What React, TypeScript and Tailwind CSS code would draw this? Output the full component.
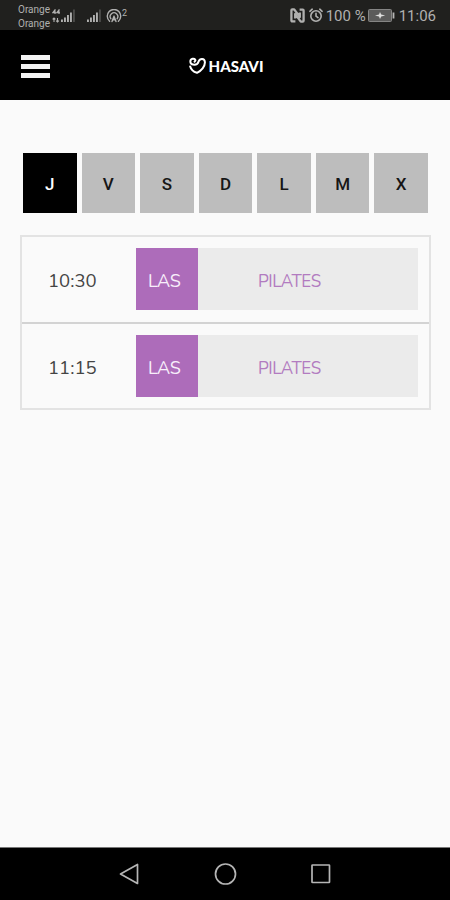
const days = ["J", "V", "S", "D", "L", "M", "X"];

const classes = [
	{ time: "10:30", room: "LAS", name: "PILATES" },
	{ time: "11:15", room: "LAS", name: "PILATES" },
];

function SignalIcon() {
	return (
		<svg width="14" height="14" viewBox="0 0 14 14" fill="currentColor">
			<rect x="0" y="10.5" width="1.9" height="2.5" />
			<rect x="3" y="8.5" width="1.9" height="4.5" />
			<rect x="6" y="6" width="1.9" height="7" />
			<rect x="9" y="3.5" width="1.9" height="9.5" />
			<rect x="12" y="0.5" width="1.9" height="12.5" opacity="0.3" />
		</svg>
	);
}

function DataIcon() {
	return (
		<svg
			width="9"
			height="14"
			viewBox="0 0 9 14"
			fill="none"
			stroke="currentColor"
			strokeWidth="1.1"
		>
			<path d="M3 5V.8L.8 3.6h3.1M7 5V.8L4.8 3.6h3.1" />
			<path d="M2 13V9M0.6 10.4 2 9l1.4 1.4M5.5 9v4M4.1 11.6l1.4 1.4 1.4-1.4" />
		</svg>
	);
}

function HotspotIcon() {
	return (
		<svg
			width="16"
			height="14"
			viewBox="0 0 16 14"
			fill="none"
			stroke="currentColor"
			strokeWidth="1.4"
			strokeLinecap="round"
		>
			<path d="M3.6 12.2A6.7 6.7 0 1 1 12.4 12.2" />
			<path d="M4.9 9.8A3.8 3.8 0 1 1 11.1 9.8" />
			<path d="M8 7.2 6 12.6M8 7.2l2 5.4M6.8 10.7h2.4" />
		</svg>
	);
}

function NfcIcon() {
	return (
		<svg
			width="15"
			height="15"
			viewBox="0 0 15 15"
			fill="none"
			stroke="currentColor"
			strokeWidth="2.3"
			strokeLinejoin="round"
		>
			<path d="M5.4 13.4H2.2a.8.8 0 0 1-.8-.8V2.2q0-.8.8-.8h2L9.8 9V4.4" />
			<path d="M9.6 1.6h3.2a.8.8 0 0 1 .8.8v10.4q0 .8-.8.8h-2L5.2 6v4.6" />
		</svg>
	);
}

function AlarmIcon() {
	return (
		<svg
			width="14"
			height="15"
			viewBox="0 0 14 15"
			fill="none"
			stroke="currentColor"
			strokeWidth="1.6"
			strokeLinecap="round"
		>
			<circle cx="7" cy="8" r="5.2" />
			<path d="M7 5.2V8l2 1.6M0.9 3.3 3.2 1.2M13.1 3.3 10.8 1.2" />
		</svg>
	);
}

function BatteryIcon() {
	return (
		<svg width="27" height="13" viewBox="0 0 27 13">
			<rect
				x="0.5"
				y="0.5"
				width="23"
				height="12"
				rx="1"
				fill="#5c5c5b"
				stroke="#858584"
			/>
			<rect x="24.6" y="3.5" width="1.8" height="6" fill="#b5b5b4" />
			<path
				d="M7 6.5l4-1L12 3l1.2 2.5 4 1-4 1L12 10l-1-2.5z"
				fill="#dededd"
			/>
		</svg>
	);
}

function StatusBar() {
	return (
		<div className="flex h-[30px] items-center bg-[#20201e] pt-px pr-[14px] pl-[18px] font-['Roboto',sans-serif] text-[#b0b0af]">
			<div className="mt-[2px] w-[34px] text-[10px] leading-[13.5px]">
				<p>Orange</p>
				<p>Orange</p>
			</div>
			<DataIcon />
			<SignalIcon />
			<div className="ml-3">
				<SignalIcon />
			</div>
			<div className="ml-[5px] flex items-start">
				<HotspotIcon />
				<span className="text-[9px] leading-[9px]">2</span>
			</div>
			<div className="ml-auto flex items-center">
				<NfcIcon />
				<div className="ml-[4px]">
					<AlarmIcon />
				</div>
				<span className="ml-[3px] w-[42px] pt-[2px] text-[15px] whitespace-nowrap">
					100 %
				</span>
				<BatteryIcon />
				<span className="ml-[4px] pt-[2px] text-[15px]">11:06</span>
			</div>
		</div>
	);
}

function Header() {
	return (
		<header className="grid h-[70px] grid-cols-[1fr_auto_1fr] items-center bg-black pt-px pr-[19px] pl-[21px] text-white">
			<div className="mt-px flex w-[29px] flex-col gap-1">
				<span className="h-[5px] bg-[#f4f4f4]" />
				<span className="h-[5px] bg-[#f4f4f4]" />
				<span className="h-[5px] bg-[#f4f4f4]" />
			</div>
			<div className="flex items-center gap-[3px]">
				<svg
					width="17"
					height="17"
					viewBox="0 0 17 17"
					fill="none"
					stroke="currentColor"
					strokeWidth="2"
					strokeLinecap="round"
					strokeLinejoin="round"
				>
					<path d="M1.2 9.4C2 12.5 5 14.8 8 15.8 12.2 13.8 16.2 9.4 15.9 5 15.5 1 11 1 9.6 4.4 8.9 7 6.6 8 4 7.6.6 7 .5 2.4 3.6 1.8 6 1.4 7.4 3.4 5.6 4.6" />
				</svg>
				<span className="pt-px font-['Lato',sans-serif] text-[15px] leading-none font-black">
					HASAVI
				</span>
			</div>
		</header>
	);
}

function DayTabs() {
	return (
		<div className="mr-[22px] ml-[23px] grid h-[60px] grid-cols-7 gap-[5px]">
			{days.map((day, index) => (
				<button
					key={day}
					type="button"
					className={`pt-[3px] font-['Roboto',sans-serif] text-[17px] font-medium ${
						index === 0 ? "bg-black text-white" : "bg-[#bdbdbd] text-[#161616]"
					}`}
				>
					{day}
				</button>
			))}
		</div>
	);
}

function Schedule() {
	return (
		<div className="mt-[22px] mr-[19px] ml-5 h-[175px] divide-y-2 divide-[#d3d3d3] border-2 border-[#e3e3e3] font-['Nunito','Open_Sans',sans-serif]">
			{classes.map((item) => (
				<div
					key={item.time}
					className="flex h-[87px] items-start pt-[11px] pr-[11px] pl-[26px]"
				>
					<span className="w-[88px] pt-[2px] text-[18.5px] leading-[62px] text-[#444]">
						{item.time}
					</span>
					<div className="flex h-[62px] flex-1 items-center bg-[#ebebeb]">
						<span className="flex h-full w-[62px] items-center bg-[#ad6cba] pt-[4px] pl-3 text-[18px] tracking-[-0.3px] text-[#f8effa]">
							{item.room}
						</span>
						<span className="ml-[60px] pt-[5px] text-[17px] tracking-[-0.4px] text-[#b27bc0]">
							{item.name}
						</span>
					</div>
				</div>
			))}
		</div>
	);
}

function NavBar() {
	return (
		<nav className="mt-auto flex h-[53px] items-center justify-center border-t border-[#777] bg-black text-[#b5b5b5]">
			<svg
				width="212"
				height="24"
				viewBox="0 0 212 24"
				fill="none"
				stroke="currentColor"
				strokeWidth="1.7"
				strokeLinejoin="round"
			>
				<path d="M18.5 2.5v19L1.5 12z" />
				<circle cx="106.5" cy="12" r="10" />
				<rect x="193" y="3" width="17.5" height="17.5" rx="0.5" />
			</svg>
		</nav>
	);
}

export default function App() {
	return (
		<div className="flex h-[900px] w-[450px] flex-col bg-[#fafafa]">
			<StatusBar />
			<Header />
			<main className="pt-[53px]">
				<DayTabs />
				<Schedule />
			</main>
			<NavBar />
		</div>
	);
}
